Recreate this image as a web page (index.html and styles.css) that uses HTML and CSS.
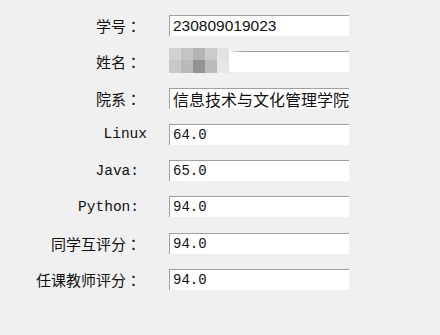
FILE: index.html
```html
<!DOCTYPE html>
<html lang="zh-CN">
  <head>
    <meta charset="UTF-8" />
    <meta name="viewport" content="width=device-width, initial-scale=1.0" />
    <title>学生成绩信息</title>
    <link rel="stylesheet" href="styles.css">
  </head>
  <body>
    <div class="info-form">
      <span class="label">学号<span class="colon">：</span></span>
      <div class="field field-sans">230809019023</div>

      <span class="label">姓名<span class="colon">：</span></span>
      <div class="field field-name">
        <div class="mosaic">
          <span class="m1"></span><span class="m2"></span><span class="m3"></span><span class="m4"></span><span class="m5"></span>
          <span class="m6"></span><span class="m7"></span><span class="m8"></span><span class="m9"></span><span class="m10"></span>
        </div>
      </div>

      <span class="label">院系<span class="colon">：</span></span>
      <div class="field field-cjk">信息技术与文化管理学院</div>

      <span class="label label-latin label-nocolon">Linux</span>
      <div class="field field-mono">64.0</div>

      <span class="label label-latin">Java:</span>
      <div class="field field-mono">65.0</div>

      <span class="label label-latin">Python:</span>
      <div class="field field-mono">94.0</div>

      <span class="label">同学互评分<span class="colon">：</span></span>
      <div class="field field-mono">94.0</div>

      <span class="label">任课教师评分<span class="colon">：</span></span>
      <div class="field field-mono">94.0</div>
    </div>
  </body>
</html>
```

FILE: styles.css
```css
body {
  margin: 0;
  background-color: #f0f0f0;
  font-family: "Noto Sans CJK SC", sans-serif;
  color: #000;
  width: 440px;
  height: 335px;
  overflow: hidden;
}
.info-form {
  display: grid;
  grid-template-columns: 140px 180px;
  grid-auto-rows: 21px;
  column-gap: 29px;
  row-gap: 15.3px;
  padding-top: 15px;
}
.label {
  display: flex;
  align-items: center;
  justify-content: flex-end;
  font-size: 15px;
  color: #111;
  white-space: nowrap;
  margin-right: -1px;
}
/* centred full-width colon, like the Windows UI font */
.colon {
  font-family: "Noto Sans CJK TC", sans-serif;
}
.label-latin {
  font-family: "Liberation Mono", "Noto Sans CJK SC", monospace;
  font-size: 14.5px;
  margin-right: 1px;
}
.label-nocolon {
  margin-right: -7px;
}
.field {
  position: relative;
  display: flex;
  align-items: center;
  box-sizing: border-box;
  background-color: #fff;
  border-top: 1px solid #a0a0a0;
  border-left: 1px solid #a0a0a0;
  padding-left: 3px;
  overflow: hidden;
  white-space: nowrap;
  color: #111;
}
.field-sans {
  font-family: "Liberation Sans", sans-serif;
  font-size: 15.5px;
}
.field-cjk {
  font-family: "Noto Sans CJK SC", sans-serif;
  font-size: 16px;
}
.field-mono {
  font-family: "Liberation Mono", monospace;
  font-size: 14px;
}
.field-name {
  overflow: visible;
}
.mosaic {
  position: absolute;
  left: -1px;
  top: -4px;
  width: 60px;
  height: 25px;
  display: grid;
  grid-template-columns: repeat(5, 12px);
  grid-template-rows: 12px 13px;
}
.mosaic::after {
  content: "";
  position: absolute;
  left: 60px;
  top: 3px;
  width: 14px;
  height: 3px;
  background: linear-gradient(to right, #fff, rgba(255, 255, 255, 0));
}
.m1 { background: #d2d2d2; }
.m2 { background: #c4c4c4; }
.m3 { background: #b4b4b4; }
.m4 { background: #cbcbcb; }
.m5 { background: #e2e2e2; }
.m6 { background: #c9c9c9; }
.m7 { background: #bababa; }
.m8 { background: #939393; }
.m9 { background: #bcbcbc; }
.m10 { background: #e6e6e6; }
```
